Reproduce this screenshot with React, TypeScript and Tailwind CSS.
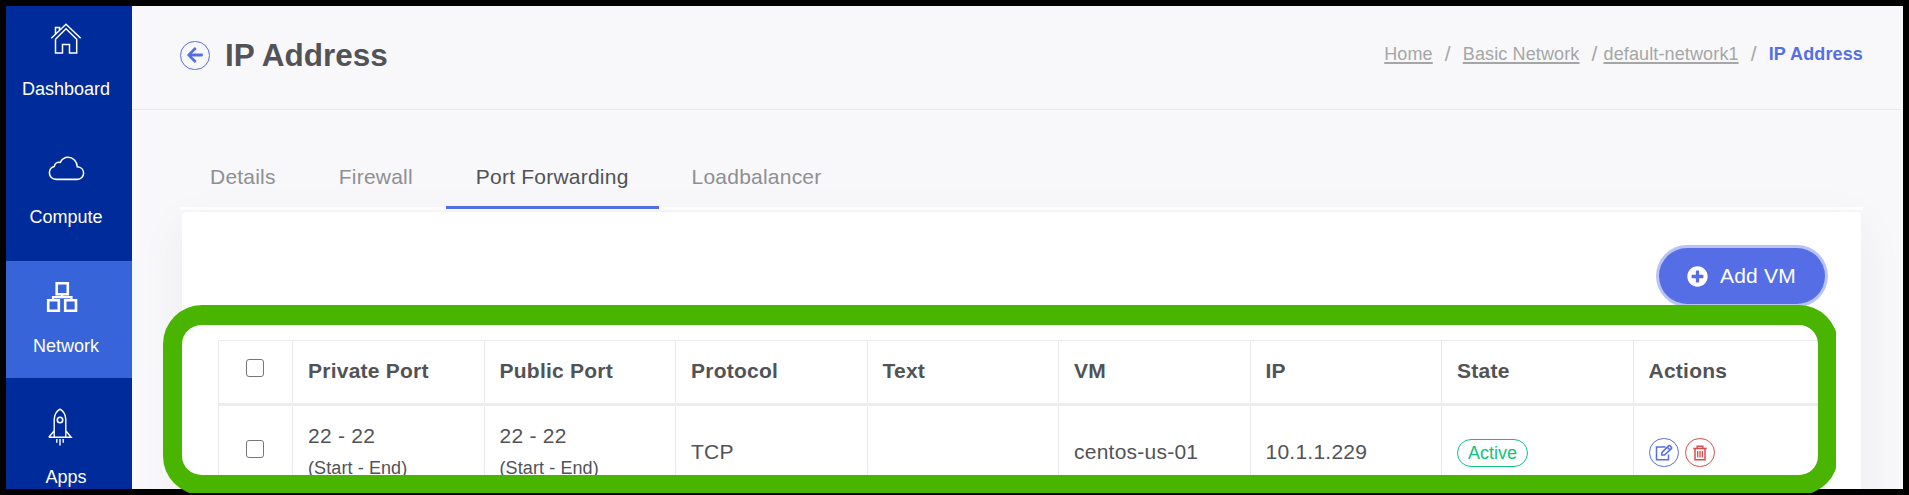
import React from "react";
import { FaArrowLeft, FaPlusCircle } from "react-icons/fa";

const HomeIcon = () => (
  <svg className="h-[32px] w-[32px]" viewBox="0 0 32 32" fill="none" stroke="currentColor" strokeWidth="1.5">
    <path d="M1.3 16.3 16 2.2 30.7 16.3M5.5 17.2 16 6.8 26.7 17.2V31H19.5V22.5H12.5V31H5.5V17.2M5.5 12.2V5.5H9.5V8" />
  </svg>
);

const CloudIcon = () => (
  <svg className="h-[25px] w-[37px]" viewBox="0 0 38 26" fill="none" stroke="currentColor" strokeWidth="1.6">
    <path d="M8.2 24.3C4.2 24.3 1.2 21.3 1.2 17.5 1.2 14 3.6 11.3 6.3 10.8 6.8 8 9.4 6.2 12.6 6.7 14.3 3.2 17.2 1.4 20.6 1.4 25.8 1.4 30 5.5 30.2 11.2 34.2 11.5 36.8 14.4 36.8 17.8 36.8 21.4 34 24.3 30.4 24.3Z" />
  </svg>
);

const NetworkIcon = () => (
  <svg className="h-[32px] w-[32px]" viewBox="0 0 32 32" fill="none" stroke="currentColor" strokeWidth="2.6">
    <path d="M10.7 2.2H21.8V13.3H10.7ZM2.2 19.2H12.8V29.8H2.2ZM19.2 19.2H30V29.8H19.2Z" />
    <path d="M16.2 13.5V16M7 18.5V16.2H25.5V18.5" strokeWidth="2.2" />
  </svg>
);

const RocketIcon = () => (
  <svg className="h-[38px] w-[26px]" viewBox="0 0 26 38" fill="none" stroke="currentColor" strokeWidth="1.4">
    <path d="M7.2 29V11.5C7.5 7 9.8 3 13 1.2 16.2 3 18.5 7 18.8 11.5V29M1.8 29.3H24.2L18.8 22.8M1.8 29.3 7.2 22.8M9.8 31V34.8M13 31V37.5M16.2 31V34.8" />
    <circle cx="13" cy="12" r="2.7" strokeWidth="1.6" />
  </svg>
);

const EditIcon = () => (
  <svg className="h-[18px] w-[18px]" viewBox="0 0 18 18" fill="none" stroke="currentColor" strokeWidth="1.5">
    <path d="M10.5 3H1.5V15.8H13.5V10.5M6.8 11V8.6L13.8 1.6Q14.3 1.2 14.8 1.6L16.6 3.4Q17 3.9 16.6 4.4L9.5 11ZM12.3 3.2 14.9 5.8" />
  </svg>
);

const TrashIcon = () => (
  <svg className="h-[16px] w-[14px]" viewBox="0 0 14 16" fill="none" stroke="currentColor" strokeWidth="1.5">
    <path d="M0.3 3.5H13.7M4.2 3.5V1.3H9.8V3.5M2 3.5V14.8H12V3.5" />
    <path d="M4.7 6V12.5M7 6V12.5M9.3 6V12.5" strokeWidth="1.3" />
  </svg>
);

const tabs = ["Details", "Firewall", "Port Forwarding", "Loadbalancer"];
const columns = ["Private Port", "Public Port", "Protocol", "Text", "VM", "IP", "State", "Actions"];

function NavItem({ label, active, className, children }: { label: string; active?: boolean; className: string; children: React.ReactNode }) {
  return (
    <div className={`flex w-full shrink-0 flex-col items-center pr-[6px] text-[18px] leading-[24px] text-white ${active ? "bg-[#3864d9]" : ""} ${className}`}>
      <div className="flex h-[38px] items-center justify-center">{children}</div>
      <span className="mt-[20px]">{label}</span>
    </div>
  );
}

const Checkbox = () => (
  <input type="checkbox" aria-label="Select" className="block h-[18px] w-[18px] appearance-none rounded-[3px] border border-[#767676] bg-white" />
);

const Range = () => (
  <>
    <div className="leading-[32px]">22 - 22</div>
    <div className="text-[18px] leading-[32px] tracking-[0.1px]">(Start - End)</div>
  </>
);

export default function App() {
  const cell = "border-l border-[#ebebeb] pl-[15px]";
  return (
    <div className="relative h-[495px] w-[1909px] overflow-hidden bg-black p-[6px] font-['Liberation_Sans',Arial,sans-serif] text-[#515356]">
      <div className="flex h-[483px] overflow-hidden bg-[#f8f8fb]">
        <nav className="flex w-[126px] shrink-0 flex-col bg-[#002b9b]">
          <NavItem label="Dashboard" className="h-[127px] pt-[13px]"><HomeIcon /></NavItem>
          <NavItem label="Compute" className="h-[128px] pt-[14px]"><span className="mt-[4px]"><CloudIcon /></span></NavItem>
          <NavItem label="Network" active className="h-[117px] pt-[15px]"><span className="mt-[4px] mr-[8px]"><NetworkIcon /></span></NavItem>
          <NavItem label="Apps" className="h-[117px] pt-[29px]"><span className="mt-[2px] mr-[12px]"><RocketIcon /></span></NavItem>
        </nav>
        <main className="flex min-w-0 grow flex-col">
          <header className="flex h-[104px] shrink-0 items-start justify-between border-b border-[#e9e9ec] pr-[40px] pl-[48px]">
            <div className="flex items-center pt-[30px]">
              <span className="flex h-[29px] w-[30px] items-center justify-center rounded-full border border-[#556ee6] text-[#556ee6]"><FaArrowLeft className="h-[18px] w-[18px]" /></span>
              <h1 className="ml-[15px] text-[31.5px] leading-[38px] font-bold">IP Address</h1>
            </div>
            <div className="flex pt-[36px] text-[18px] leading-[24px] tracking-[0.13px] whitespace-pre text-[#a6a6a6]">
              <span className="underline decoration-2 underline-offset-[2px]">Home</span>
              <span className="w-[30px] text-center text-[21px]">/</span>
              <span className="underline decoration-2 underline-offset-[2px]">Basic Network</span>
              <span className="w-[24px] pl-[12px] text-[21px]">/</span>
              <span className="underline decoration-2 underline-offset-[2px]">default-network1</span>
              <span className="w-[30px] text-center text-[21px]">/</span>
              <span className="font-bold text-[#556ee6]">IP Address</span>
            </div>
          </header>
          <div className="mt-[42px] ml-[48px] flex h-[58px] w-[1683px] shrink-0 gap-[3px] text-[21px] leading-[50px] tracking-[0.22px] text-[#8e8f92] shadow-[inset_0_-3px_0_#fff]">
            {tabs.map((t) => (
              <div key={t} className={`pr-[30px] pl-[30px] ${t === "Port Forwarding" ? "h-[57px] border-b-3 border-[#556ee6] text-[#515356]" : ""}`}>{t}</div>
            ))}
          </div>
          <section className="mt-[2px] ml-[50px] flex h-[400px] w-[1679px] shrink-0 flex-col rounded-[4px] bg-white px-[36px] pt-[36px] shadow-[0_12px_50px_rgba(18,20,30,0.05)]">
            <button className="flex h-[56px] w-[166px] shrink-0 items-center self-end rounded-full bg-[#556ee6] pl-[28px] text-[21px] tracking-[0.2px] text-white shadow-[0_0_0_3px_#b9c4f5]">
              <FaPlusCircle className="h-[21px] w-[21px]" />
              <span className="ml-[12px]">Add VM</span>
            </button>
            <div className="mt-[36px] flex w-[1607px] flex-col border border-[#ebebeb] text-[21px] tracking-[0.24px]">
              <div className="grid h-[65px] grid-cols-[73px_repeat(8,minmax(0,1fr))] border-b-3 border-[#ededed] leading-[60px] font-bold">
                <div className="pt-[18px] pl-[27px]"><Checkbox /></div>
                {columns.map((c) => <div key={c} className={cell}>{c}</div>)}
              </div>
              <div className="grid h-[100px] grid-cols-[73px_repeat(8,minmax(0,1fr))] leading-[92px]">
                <div className="pt-[34px] pl-[27px]"><Checkbox /></div>
                <div className={`${cell} pt-[14px]`}><Range /></div>
                <div className={`${cell} pt-[14px]`}><Range /></div>
                <div className={cell}>TCP</div>
                <div className={cell} />
                <div className={cell}>centos-us-01</div>
                <div className={cell}>10.1.1.229</div>
                <div className={`${cell} pt-[33px]`}>
                  <span className="flex h-[28px] w-[71px] items-center justify-center rounded-full border-[1.5px] border-[#10c280] text-[18px] leading-[24px] tracking-normal text-[#10c280]">Active</span>
                </div>
                <div className={`${cell} flex gap-[6px] pt-[32px]`}>
                  <span className="flex h-[29px] w-[30px] items-center justify-center rounded-full border border-[#556ee6] text-[#556ee6]"><EditIcon /></span>
                  <span className="flex h-[29px] w-[30px] items-center justify-center rounded-full border border-[#dc4b4b] text-[#dc4b4b]"><TrashIcon /></span>
                </div>
              </div>
            </div>
          </section>
        </main>
      </div>
      <div className="absolute top-[304.500px] left-[163px] h-[188.500px] w-[1673px] overflow-hidden">
        <div className="h-[190.500px] w-[1675px] rounded-[39px] border-[20px] border-l-[19px] border-[#49b500]" />
      </div>
    </div>
  );
}
